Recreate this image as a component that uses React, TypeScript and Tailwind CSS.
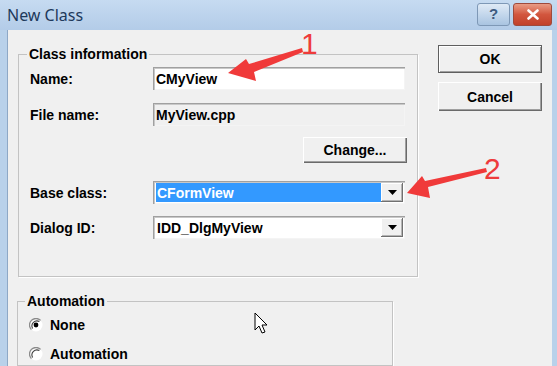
import React from 'react';

const font = { fontFamily: '"Liberation Sans", Arial, sans-serif' };

const Sunken: React.FC<{ className?: string; children?: React.ReactNode }> = ({ className = '', children }) => (
  <div
    className={`flex items-center pl-[3px] shadow-[inset_1px_1px_#a0a0a0,inset_2px_2px_#c8c8c8,inset_-1px_-1px_#f4f4f4] ${className}`}
  >
    {children}
  </div>
);

const Combo: React.FC<{ value: string; selected?: boolean }> = ({ value, selected }) => (
  <Sunken className="w-[252px] h-[23px] bg-white pr-[2px] pl-[2px] py-[2px]">
    <div
      className={`flex-1 h-full flex items-center pl-[1px] ${selected ? 'bg-[#3399ff] text-white' : 'text-black'}`}
    >
      {value}
    </div>
    <div className="w-[22px] h-full bg-[#f0f0f0] flex items-center justify-center shadow-[inset_-1px_-1px_#707070,inset_1px_1px_#ffffff,inset_-2px_-2px_#b4b4b4]">
      <svg width="9" height="5" viewBox="0 0 9 5">
        <polygon points="0,0 9,0 4.5,5" fill="#000" />
      </svg>
    </div>
  </Sunken>
);

const Button: React.FC<{ label: string; className?: string; isDefault?: boolean }> = ({ label, className = '', isDefault }) => (
  <div
    className={`flex items-center justify-center bg-[#f0f0f0] ${
      isDefault
        ? 'shadow-[inset_1px_1px_#5f5f5f,inset_-1px_-1px_#5f5f5f,inset_2px_2px_#ffffff,inset_-2px_-2px_#a0a0a0]'
        : 'shadow-[inset_1px_1px_#ffffff,inset_-1px_-1px_#6a6a6a,inset_-2px_-2px_#a0a0a0]'
    } ${className}`}
  >
    {label}
  </div>
);

const Radio: React.FC<{ checked?: boolean }> = ({ checked }) => (
  <svg width="14" height="14" viewBox="0 0 14 14">
    <circle cx="7" cy="7" r="6.5" fill="#ffffff" />
    <path d="M11.6 2.4 A6.5 6.5 0 0 0 2.4 11.6" stroke="#8a8a8a" strokeWidth="1.3" fill="none" />
    <path d="M10.4 3.6 A5 5 0 0 0 3.6 10.4" stroke="#404040" strokeWidth="1.1" fill="none" />
    {checked && <circle cx="7" cy="7" r="2.4" fill="#000" />}
  </svg>
);

export default function App() {
  return (
    <div
      className="relative w-[557px] h-[366px] overflow-hidden bg-[#b9d1ea] text-[14px] font-bold text-black leading-[16px]"
      style={font}
    >
      {/* title bar */}
      <div className="h-[30px] flex items-center bg-gradient-to-b from-[#c6dbf1] to-[#b3cce8]">
        <span className="ml-[7px] text-[16px] font-normal text-[#1e395b]" style={{ fontFamily: '"Noto Sans", sans-serif' }}>
          New Class
        </span>
        <div className="ml-auto mr-[5px] mb-[2px] flex gap-[3px]">
          <div className="w-[33px] h-[23px] rounded-[3px] border border-[#7e98b6] bg-gradient-to-b from-[#dfeaf6] to-[#a9c4e1] flex items-center justify-center text-[#3d5b80] text-[15px] font-bold">
            ?
          </div>
          <div className="w-[39px] h-[23px] rounded-[3px] border border-[#9e4a3c] bg-gradient-to-b from-[#e89b85] via-[#d2563e] to-[#c2412a] flex items-center justify-center">
            <svg width="12" height="11" viewBox="0 0 12 11">
              <path d="M1.5 1.5 L10.5 9.5 M10.5 1.5 L1.5 9.5" stroke="#ffffff" strokeWidth="2.6" strokeLinecap="round" />
            </svg>
          </div>
        </div>
      </div>

      {/* client area */}
      <div className="ml-[7px] mr-[5px] h-[336px] bg-[#f0f0f0] flex border-l border-[#8ea8c6]">
        <div className="flex flex-col">
          <fieldset className="ml-[10px] mt-[16px] w-[400px] border border-[#c3c3c3] shadow-[1px_1px_#ffffff] pl-[11px] pb-[37px]">
            <legend className="px-[2px] -ml-[3px] leading-[16px]">Class information</legend>
            <div className="flex items-center mt-[5px] h-[23px]">
              <span className="w-[123px]">Name:</span>
              <Sunken className="w-[252px] h-[23px] bg-white">CMyView</Sunken>
            </div>
            <div className="flex items-center mt-[13px] h-[23px]">
              <span className="w-[123px]">File name:</span>
              <Sunken className="w-[252px] h-[23px] bg-[#f0f0f0]">MyView.cpp</Sunken>
            </div>
            <div className="flex mt-[11px]">
              <Button label="Change..." className="ml-[273px] w-[104px] h-[26px]" />
            </div>
            <div className="flex items-center mt-[18px] h-[23px]">
              <span className="w-[123px]">Base class:</span>
              <Combo value="CFormView" selected />
            </div>
            <div className="flex items-center mt-[12px] h-[23px]">
              <span className="w-[123px]">Dialog ID:</span>
              <Combo value="IDD_DlgMyView" />
            </div>
          </fieldset>

          <fieldset className="ml-[9px] mt-[16px] w-[376px] h-[130px] border border-[#c3c3c3] shadow-[1px_1px_#ffffff] pl-[11px]">
            <legend className="px-[2px] -ml-[4px] leading-[16px]">Automation</legend>
            <div className="flex items-center mt-[8px] h-[16px]">
              <Radio checked />
              <span className="ml-[7px]">None</span>
            </div>
            <div className="flex items-center mt-[13px] h-[16px]">
              <Radio />
              <span className="ml-[7px]">Automation</span>
            </div>
          </fieldset>
        </div>

        <div className="flex flex-col ml-[20px]">
          <Button label="OK" isDefault className="mt-[15px] w-[104px] h-[28px]" />
          <Button label="Cancel" className="mt-[9px] w-[104px] h-[29px]" />
        </div>
      </div>

      {/* annotations */}
      <svg className="absolute left-0 top-0 pointer-events-none" width="557" height="366" viewBox="0 0 557 366">
        <polygon points="228,73 246,59 249,64 302,48 303,52 254,72 256,81" fill="#f03a3a" />
        <polygon points="407,193 422,176 425,181 486,168 487,172 428,187 430,198" fill="#f03a3a" />
        <path d="M255 313 L255 330 L259 326 L262 333 L265 332 L262 325 L267 325 Z" fill="#ffffff" stroke="#000" strokeWidth="1" strokeLinejoin="round" />
      </svg>
      <span className="absolute left-[301px] top-[29px] text-[30px] font-normal text-[#ee3b3b] leading-[30px]">1</span>
      <span className="absolute left-[484px] top-[154px] text-[30px] font-normal text-[#ee3b3b] leading-[30px]">2</span>
    </div>
  );
}
